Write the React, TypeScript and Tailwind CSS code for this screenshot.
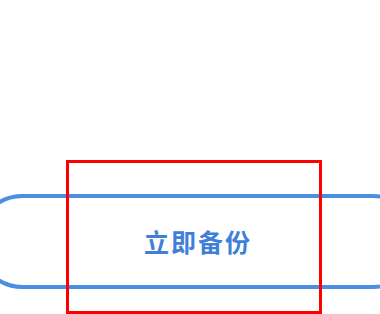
import React from 'react'

const App: React.FC = () => {
  return (
    <div className="relative w-[380px] h-[314px] overflow-hidden bg-white">
      <div className="pt-[194px]">
        <button
          className="-ml-[25px] w-[446px] h-[95px] border-[4px] border-[#4a8fe3] rounded-full flex items-center justify-center bg-white"
        >
          <span
            className="text-[25px] font-bold text-[#3f7fd8] tracking-[2px]"
            style={{ fontFamily: '"Noto Sans CJK SC", "Noto Sans", sans-serif' }}
          >
            立即备份
          </span>
        </button>
      </div>

      {/* annotation box */}
      <div className="absolute left-[66px] top-[160px] w-[256px] h-[154px] border-[3px] border-[#ff0000]" />
    </div>
  )
}

export default App
